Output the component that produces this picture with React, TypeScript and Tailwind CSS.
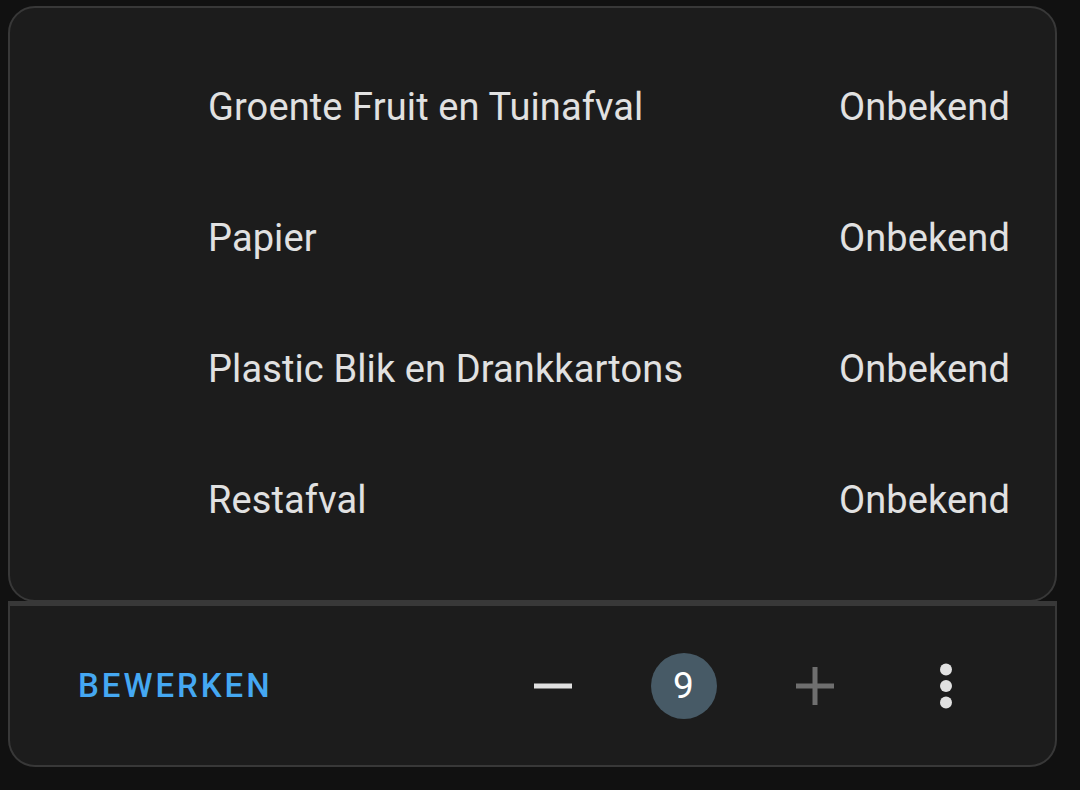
const rows = [
  "Groente Fruit en Tuinafval",
  "Papier",
  "Plastic Blik en Drankkartons",
  "Restafval",
];

function Minus() {
  return (
    <svg width="40" height="40" viewBox="0 0 40 40">
      <rect x="1" y="17.5" width="38" height="5" fill="#e1e1e1" />
    </svg>
  );
}

function Plus() {
  return (
    <svg width="40" height="40" viewBox="0 0 40 40">
      <rect x="1" y="17.5" width="38" height="5" fill="#6f6f6f" />
      <rect x="17.5" y="1" width="5" height="38" fill="#6f6f6f" />
    </svg>
  );
}

function Dots() {
  return (
    <svg width="14" height="48" viewBox="0 0 14 48">
      <circle cx="7" cy="7.5" r="6" fill="#e1e1e1" />
      <circle cx="7" cy="24" r="6" fill="#e1e1e1" />
      <circle cx="7" cy="40.5" r="6" fill="#e1e1e1" />
    </svg>
  );
}

export default function App() {
  return (
    <div
      className="w-[1080px] h-[790px] bg-[#111111] pt-[6px] pl-[8px]"
      style={{ fontFamily: "Roboto, 'Noto Sans', sans-serif" }}
    >
      <div className="w-[1049px] h-[596px] bg-[#1c1c1c] border-2 border-[#383838] rounded-[27px] pt-[34px] pl-[198px] pr-[45px] text-[#e1e1e1] text-[38px] tracking-[0.003em]">
        {rows.map((name) => (
          <div key={name} className="h-[131px] flex items-center justify-between">
            <span>{name}</span>
            <span>Onbekend</span>
          </div>
        ))}
      </div>
      <div className="-mt-[1px] w-[1049px] h-[166px] bg-[#1c1c1c] border-2 border-t-[5px] border-[#383838] rounded-b-[27px] flex items-center pl-[68px] pr-[44px]">
        <button className="text-[#45a8f2] text-[33px] font-medium tracking-[0.09em] uppercase">
          Bewerken
        </button>
        <div className="ml-auto flex items-center">
          <div className="w-[131px] flex justify-center">
            <Minus />
          </div>
          <div className="w-[131px] flex justify-center">
            <div className="w-[66px] h-[66px] rounded-full bg-[#475a66] flex items-center justify-center text-white text-[37px]">
              9
            </div>
          </div>
          <div className="w-[131px] flex justify-center">
            <Plus />
          </div>
          <div className="w-[131px] flex justify-center">
            <Dots />
          </div>
        </div>
      </div>
    </div>
  );
}
